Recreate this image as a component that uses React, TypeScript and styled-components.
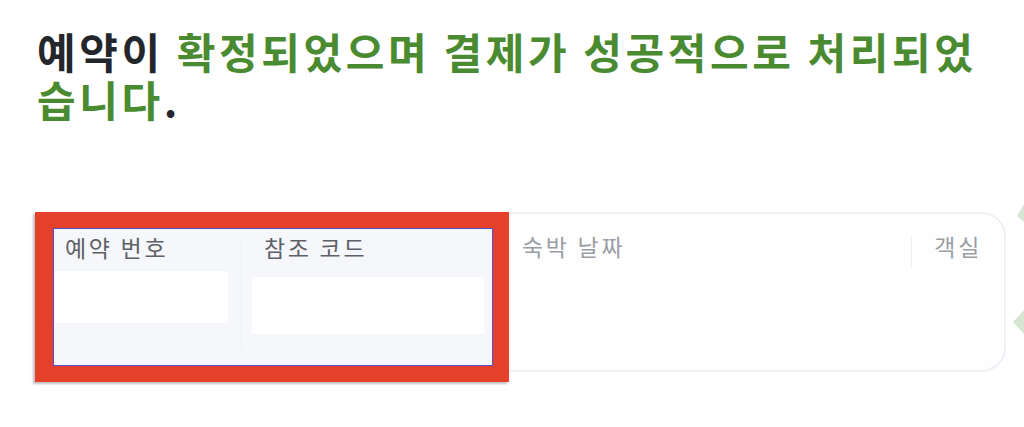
import React from "react";
import styled, { createGlobalStyle } from "styled-components";

const GlobalStyle = createGlobalStyle`
  body {
    margin: 0;
    background: #ffffff;
    font-family: "Noto Sans CJK KR", "Noto Sans", sans-serif;
  }
`;

type Column = {
  label: string;
  muted?: boolean;
};

const Page = styled.div`
  position: relative;
  width: 1024px;
  height: 427px;
  overflow: hidden;
  box-sizing: border-box;
  padding: 27px 0 0 37px;
`;

const Title = styled.h1`
  margin: 0;
  width: 950px;
  font-size: 42px;
  line-height: 48px;
  font-weight: 700;
  color: #23272c;
  letter-spacing: 3.6px;
`;

const Accent = styled.span`
  color: #4a8a30;
`;

const Card = styled.div`
  display: flex;
  width: 969px;
  height: 160px;
  box-sizing: border-box;
  margin-top: 89px;
  padding: 14px 14px 0 14px;
  border: 2px solid #eef0f6;
  border-radius: 24px;
  background: #fefefe;
`;

const Group = styled.div`
  position: relative;
  display: flex;
  flex: 0 0 440px;
  height: 138px;
  box-sizing: border-box;
  border: 1px solid #5050d0;
  background: #f6f7fb;
`;

const Highlight = styled.div`
  position: absolute;
  top: -17px;
  left: -19px;
  right: -17px;
  bottom: -17px;
  border: 16px solid #e5412a;
  border-left-width: 18px;
  box-shadow: -2px 2px 2px rgba(0, 0, 0, 0.25);
  pointer-events: none;
`;

const Cell = styled.div<{ $width?: number; $grow?: boolean }>`
  display: flex;
  flex-direction: column;
  flex: ${(p) => (p.$width ? `0 0 ${p.$width}px` : p.$grow ? "1 1 auto" : "0 0 auto")};
  box-sizing: border-box;
  padding-top: 3px;
`;

const Label = styled.div<{ $pad: number; $padRight?: number; $muted?: boolean }>`
  padding: 0 ${(p) => p.$padRight ?? 0}px 0 ${(p) => p.$pad}px;
  font-size: 23px;
  line-height: 30px;
  font-weight: 400;
  letter-spacing: 2.7px;
  color: ${(p) => (p.$muted ? "#9a9ea4" : "#5d6167")};
  white-space: nowrap;
`;

const Blank = styled.div<{ $left: number; $width: number; $height: number; $top: number }>`
  margin: ${(p) => p.$top}px 0 0 ${(p) => p.$left}px;
  width: ${(p) => p.$width}px;
  height: ${(p) => p.$height}px;
  border-radius: 3px;
  background: #ffffff;
`;

const Divider = styled.div<{ $top: number; $height: number }>`
  flex: 0 0 1px;
  align-self: flex-start;
  margin-top: ${(p) => p.$top}px;
  height: ${(p) => p.$height}px;
  background: #eceef3;
`;

const Decor = styled.svg`
  position: absolute;
  right: 0;
  top: 200px;
`;

const columns: Column[] = [
  { label: "예약 번호" },
  { label: "참조 코드" },
  { label: "숙박 날짜", muted: true },
  { label: "객실", muted: true },
];

export default function App() {
  return (
    <>
      <GlobalStyle />
      <Page>
        <Title>
          예약이 <Accent>확정되었으며 결제가 성공적으로 처리되었습니다</Accent>.
        </Title>

        <Card>
          <Group>
            <Cell $width={187}>
              <Label $pad={11}>{columns[0].label}</Label>
              <Blank $left={1} $width={173} $height={52} $top={9} />
            </Cell>
            <Divider $top={8} $height={113} />
            <Cell $grow>
              <Label $pad={22}>{columns[1].label}</Label>
              <Blank $left={10} $width={232} $height={57} $top={15} />
            </Cell>
            <Highlight />
          </Group>
          <Cell $grow>
            <Label $pad={29} $muted>
              {columns[2].label}
            </Label>
          </Cell>
          <Divider $top={9} $height={30} />
          <Cell>
            <Label $pad={22} $padRight={8} $muted>
              {columns[3].label}
            </Label>
          </Cell>
        </Card>

        <Decor width="12" height="140" viewBox="0 0 12 140">
          <polygon points="12,4 5,16 12,22" fill="#d6e6d2" />
          <polygon points="12,110 1,122 12,134" fill="#d6e6d2" />
        </Decor>
      </Page>
    </>
  );
}
